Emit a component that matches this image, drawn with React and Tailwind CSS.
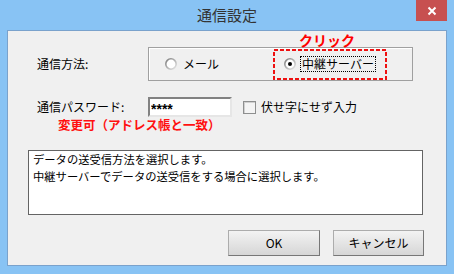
import { useState } from "react";

function Radio({ checked }) {
  return (
    <svg width="12" height="12" viewBox="0 0 12 12" className="shrink-0">
      <defs>
        <linearGradient id="rg" x1="0" y1="0" x2="1" y2="1">
          <stop offset="0" stopColor="#7d7d7d" />
          <stop offset="1" stopColor="#e6e6e6" />
        </linearGradient>
      </defs>
      <circle cx="6" cy="6" r="5.2" fill="#fff" stroke="url(#rg)" strokeWidth="1.6" />
      {checked && <circle cx="6" cy="6" r="2" fill="#000" />}
    </svg>
  );
}

function App() {
  const [method, setMethod] = useState("relay");
  const [plain, setPlain] = useState(false);

  return (
    <div className="w-[454px] h-[274px] bg-[#88c3f4] flex flex-col font-['Noto_Sans_CJK_JP',sans-serif] text-black">
      {/* TITLE BAR */}
      <div className="h-[30px] relative flex items-center justify-center">
        <span className="text-[15px] text-[#333] leading-none pb-[1px]">通信設定</span>
        <button className="absolute right-[7px] top-0 w-[31px] h-[21px] bg-[#c75050] flex items-center justify-center">
          <svg width="10" height="10" viewBox="0 0 10 10">
            <path d="M1.5 1.5 L8.5 8.5 M8.5 1.5 L1.5 8.5" stroke="#fff" strokeWidth="2" />
          </svg>
        </button>
      </div>

      {/* CLIENT */}
      <div className="mx-[7px] h-[236px] border border-[#7aa2cc] bg-[#f0f0f0] text-[12px] leading-[14px]">
        {/* method */}
        <div className="flex items-center pl-[29px] mt-[16px]">
          <span className="w-[111px]">通信方法:</span>
          <div className="relative w-[265px] h-[34px] border border-[#a0a0a0] shadow-[inset_1px_1px_0_#fff] flex items-center pl-[16px]">
            <label className="w-[119px] flex items-center gap-[6px]" onClick={() => setMethod("mail")}>
              <Radio checked={method === "mail"} />
              <span>メール</span>
            </label>
            <label className="flex items-center gap-[4px]" onClick={() => setMethod("relay")}>
              <Radio checked={method === "relay"} />
              <span className="border border-dotted border-black px-[1px]">中継サーバー</span>
            </label>

            {/* annotation */}
            <span className="absolute left-[150px] top-[-16px] text-[14px] font-bold text-[#ff0000] leading-[16px]">クリック</span>
            <svg className="absolute left-[124px] top-[1px]" width="114" height="31" viewBox="0 0 114 31">
              <rect x="1" y="1" width="112" height="29" fill="none" stroke="#ee1111" strokeWidth="2" strokeDasharray="4 2" />
            </svg>
          </div>
        </div>

        {/* password */}
        <div className="flex items-center pl-[29px] mt-[16px]">
          <span className="w-[111px]">通信パスワード:</span>
          <input
            type="text"
            defaultValue="****"
            className="w-[84px] h-[20px] border-2 border-t-[#828282] border-l-[#828282] border-r-[#e6e6e6] border-b-[#e6e6e6] bg-white px-[1px] pt-[3px] text-[14px] font-bold font-['Liberation_Sans',sans-serif] outline-none"
          />
          <span
            className="ml-[11px] w-[13px] h-[13px] border border-[#8e8f8f] bg-[#f4f4f4] shadow-[inset_1px_1px_0_#d0d0d0] shrink-0"
            onClick={() => setPlain(!plain)}
          ></span>
          <span className="ml-[5px]">伏せ字にせず入力</span>
        </div>

        <div className="pl-[50px] mt-[1px] font-bold text-[#ff1010] text-[12.5px]">変更可（アドレス帳と一致）</div>

        {/* description */}
        <div className="ml-[20px] mt-[18px] w-[395px] h-[65px] border border-[#646464] bg-white pl-[4px] text-[11.3px] leading-[16.5px]">
          <div>データの送受信方法を選択します。</div>
          <div>中継サーバーでデータの送受信をする場合に選択します。</div>
        </div>

        {/* buttons */}
        <div className="flex justify-end gap-[13px] pr-[22px] mt-[15px]">
          <button className="w-[92px] h-[26px] border border-[#acacac] border-r-[#777] border-b-[#777] bg-gradient-to-b from-[#f3f3f3] to-[#d6d6d6] text-[12px]">OK</button>
          <button className="w-[91px] h-[26px] border border-[#acacac] border-r-[#777] border-b-[#777] bg-gradient-to-b from-[#f3f3f3] to-[#d6d6d6] text-[12px]">キャンセル</button>
        </div>
      </div>
    </div>
  );
}

export default App;
